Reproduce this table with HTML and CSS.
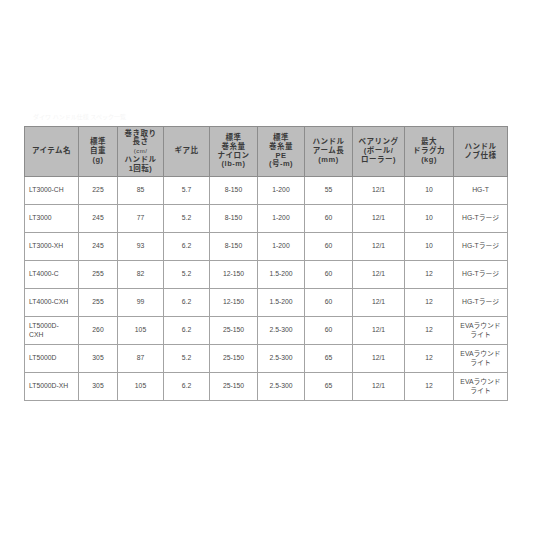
FILE: index.html
```html
<!DOCTYPE html>
<html lang="ja">
<head>
<meta charset="utf-8">
<link rel="stylesheet" href="styles.css">
</head>
<body>
<div class="page">
  <div class="caption">ダイワ ハンドル仕様 スペック一覧</div>
  <table class="spec">
    <colgroup>
      <col class="c1"><col class="c2"><col class="c3"><col class="c4"><col class="c5">
      <col class="c6"><col class="c7"><col class="c8"><col class="c9"><col class="c10">
    </colgroup>
    <thead>
      <tr>
        <th>アイテム名</th>
        <th>標準<br>自重<br>(g)</th>
        <th>巻き取り<br>長さ<br><span class="sm">(cm/</span><br>ハンドル<br>1回転)</th>
        <th>ギア比</th>
        <th>標準<br>巻糸量<br>ナイロン<br>(lb-m)</th>
        <th>標準<br>巻糸量<br>PE<br>(号-m)</th>
        <th>ハンドル<br>アーム長<br>(mm)</th>
        <th>ベアリング<br>(ボール/<br>ローラー)</th>
        <th>最大<br>ドラグ力<br>(kg)</th>
        <th>ハンドル<br>ノブ仕様</th>
      </tr>
    </thead>
    <tbody>
      <tr><td class="name">LT3000-CH</td><td>225</td><td>85</td><td>5.7</td><td>8-150</td><td>1-200</td><td>55</td><td>12/1</td><td>10</td><td>HG-T</td></tr>
      <tr><td class="name">LT3000</td><td>245</td><td>77</td><td>5.2</td><td>8-150</td><td>1-200</td><td>60</td><td>12/1</td><td>10</td><td>HG-Tラージ</td></tr>
      <tr><td class="name">LT3000-XH</td><td>245</td><td>93</td><td>6.2</td><td>8-150</td><td>1-200</td><td>60</td><td>12/1</td><td>10</td><td>HG-Tラージ</td></tr>
      <tr><td class="name">LT4000-C</td><td>255</td><td>82</td><td>5.2</td><td>12-150</td><td>1.5-200</td><td>60</td><td>12/1</td><td>12</td><td>HG-Tラージ</td></tr>
      <tr><td class="name">LT4000-CXH</td><td>255</td><td>99</td><td>6.2</td><td>12-150</td><td>1.5-200</td><td>60</td><td>12/1</td><td>12</td><td>HG-Tラージ</td></tr>
      <tr><td class="name">LT5000D-<br>CXH</td><td>260</td><td>105</td><td>6.2</td><td>25-150</td><td>2.5-300</td><td>60</td><td>12/1</td><td>12</td><td>EVAラウンド<br>ライト</td></tr>
      <tr><td class="name">LT5000D</td><td>305</td><td>87</td><td>5.2</td><td>25-150</td><td>2.5-300</td><td>65</td><td>12/1</td><td>12</td><td>EVAラウンド<br>ライト</td></tr>
      <tr><td class="name">LT5000D-XH</td><td>305</td><td>105</td><td>6.2</td><td>25-150</td><td>2.5-300</td><td>65</td><td>12/1</td><td>12</td><td>EVAラウンド<br>ライト</td></tr>
    </tbody>
  </table>
</div>
</body>
</html>
```

FILE: styles.css
```css
html, body {
  margin: 0;
  padding: 0;
  background: #ffffff;
}

.page {
  padding: 112px 0 0 24px;
  font-family: "Liberation Sans", "Noto Sans CJK JP", sans-serif;
}

.caption {
  height: 14px;
  padding-left: 9px;
  font-size: 6px;
  line-height: 10px;
  color: #f5f5f5;
}

.spec {
  border-collapse: collapse;
  table-layout: fixed;
  width: 484px;
  color: #444;
}

.c1 { width: 54px; }
.c2 { width: 39px; }
.c3 { width: 46px; }
.c4 { width: 46px; }
.c5 { width: 48px; }
.c6 { width: 47px; }
.c7 { width: 48px; }
.c8 { width: 52px; }
.c9 { width: 49px; }
.c10 { width: 54px; }

.spec th {
  background: #bdbdbd;
  border: 1px solid #8c8c8c;
  height: 49px;
  padding: 0;
  font-size: 7.5px;
  line-height: 8.7px;
  letter-spacing: 0.5px;
  font-weight: bold;
  color: #3a3a3a;
  text-align: center;
  vertical-align: middle;
}

.spec th .sm {
  font-size: 6px;
  font-weight: normal;
}

.spec td {
  border: 1px solid #a3a3a3;
  height: 27px;
  padding: 0;
  font-size: 6.8px;
  line-height: 8.5px;
  color: #4a4a4a;
  text-align: center;
  vertical-align: middle;
}

.spec td.name {
  text-align: left;
  padding-left: 4px;
}
```
